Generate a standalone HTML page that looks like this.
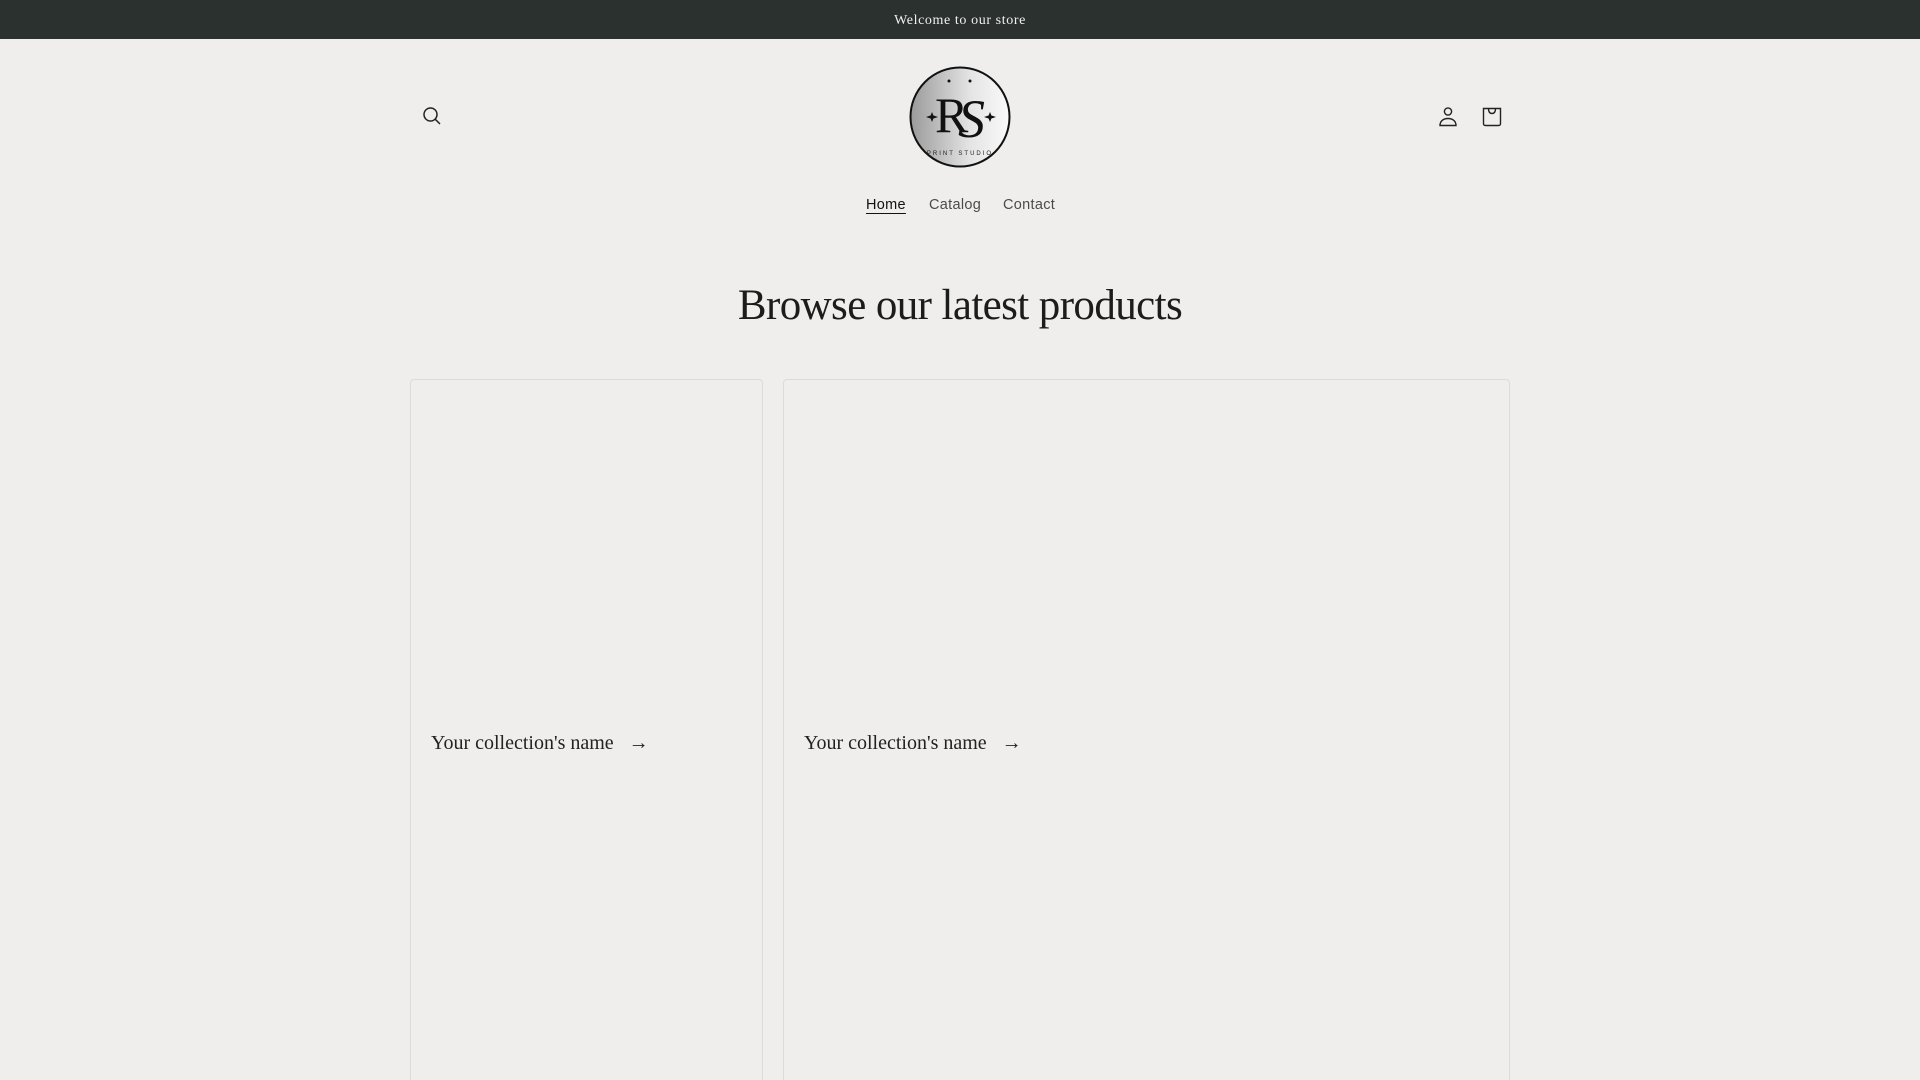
<!DOCTYPE html>
<html><head><meta charset="utf-8"><style>
*{margin:0;padding:0;box-sizing:border-box}
html,body{overflow:hidden}
body{width:1920px;height:1080px;background:#efeeec;font-family:"Liberation Sans",sans-serif;color:#121212;position:relative}
.bar{position:absolute;left:0;top:0;width:1920px;height:39px;background:#2a312e;color:#f0f0f0;font-family:"Liberation Serif",serif;font-size:14px;letter-spacing:.6px;text-align:center;line-height:42px}
.nav{position:absolute;top:197px;font-size:14.5px;color:rgba(18,18,18,.75);letter-spacing:.3px}
h1{position:absolute;left:0;width:1920px;top:281px;text-align:center;font-family:"Liberation Serif",serif;font-weight:normal;font-size:43px;letter-spacing:-.6px;color:#1c1c1c}
.card{position:absolute;top:379px;height:701px;border:1px solid #dcdbd9;border-bottom:none;border-radius:4px 4px 0 0}
.ct{position:absolute;top:732px;font-family:"Liberation Serif",serif;font-size:20px;color:#222}
</style></head><body>
<div class="bar">Welcome to our store</div>
<svg style="position:absolute;left:420px;top:104px" width="24" height="24" viewBox="0 0 24 24" fill="none" stroke="#222" stroke-width="1.5"><circle cx="10.5" cy="10.5" r="6.5"/><path d="M15.3 15.3L20 20"/></svg>
<svg style="position:absolute;left:1436px;top:105px" width="24" height="24" viewBox="0 0 24 24" fill="none" stroke="#222" stroke-width="1.4"><circle cx="12" cy="6.5" r="3.6"/><path d="M4 20.5h16c0-4.5-3.5-7-8-7s-8 2.5-8 7z"/></svg>
<svg style="position:absolute;left:1480px;top:105px" width="24" height="24" viewBox="0 0 24 24" fill="none" stroke="#222" stroke-width="1.4"><path d="M3.5 3.5h17v15q0 2-2 2h-13q-2 0-2-2z"/><path d="M8.5 3.5q0 5 3.5 5t3.5-5"/></svg>
<svg style="position:absolute;left:908px;top:65px" width="104" height="104" viewBox="0 0 104 104">
<defs><linearGradient id="g" x1="0" x2="1"><stop offset="0" stop-color="#9a9a9a"/><stop offset=".6" stop-color="#e4e4e4"/><stop offset="1" stop-color="#fafafa"/></linearGradient></defs>
<circle cx="52" cy="52" r="49.5" fill="url(#g)" stroke="#111" stroke-width="2"/>
<text x="27" y="67" font-family="Liberation Serif,serif" font-size="50" fill="#111">R</text>
<text x="50" y="72" font-family="Liberation Serif,serif" font-size="54" font-style="italic" fill="#111">S</text>
<path d="M22 52l2-5 2 5-2 5zM18 52l6-2 6 2-6 2zM80 52l2-5 2 5-2 5zM76 52l6-2 6 2-6 2z" fill="#111"/>
<circle cx="41" cy="16" r="1.5" fill="#111"/><circle cx="62" cy="16" r="1.5" fill="#111"/>
<text x="52" y="90" text-anchor="middle" font-family="Liberation Sans,sans-serif" font-size="6" letter-spacing="2" fill="#222">PRINT STUDIO</text>
</svg>
<div class="nav" style="left:866px;color:#121212;text-decoration:underline;text-underline-offset:4px">Home</div>
<div class="nav" style="left:929px">Catalog</div>
<div class="nav" style="left:1003px">Contact</div>
<h1>Browse our latest products</h1>
<div class="card" style="left:410px;width:353px"></div>
<div class="card" style="left:783px;width:727px"></div>
<div class="ct" style="left:431px">Your collection's name <span style="margin-left:10px">→</span></div>
<div class="ct" style="left:804px">Your collection's name <span style="margin-left:10px">→</span></div>
</body></html>
